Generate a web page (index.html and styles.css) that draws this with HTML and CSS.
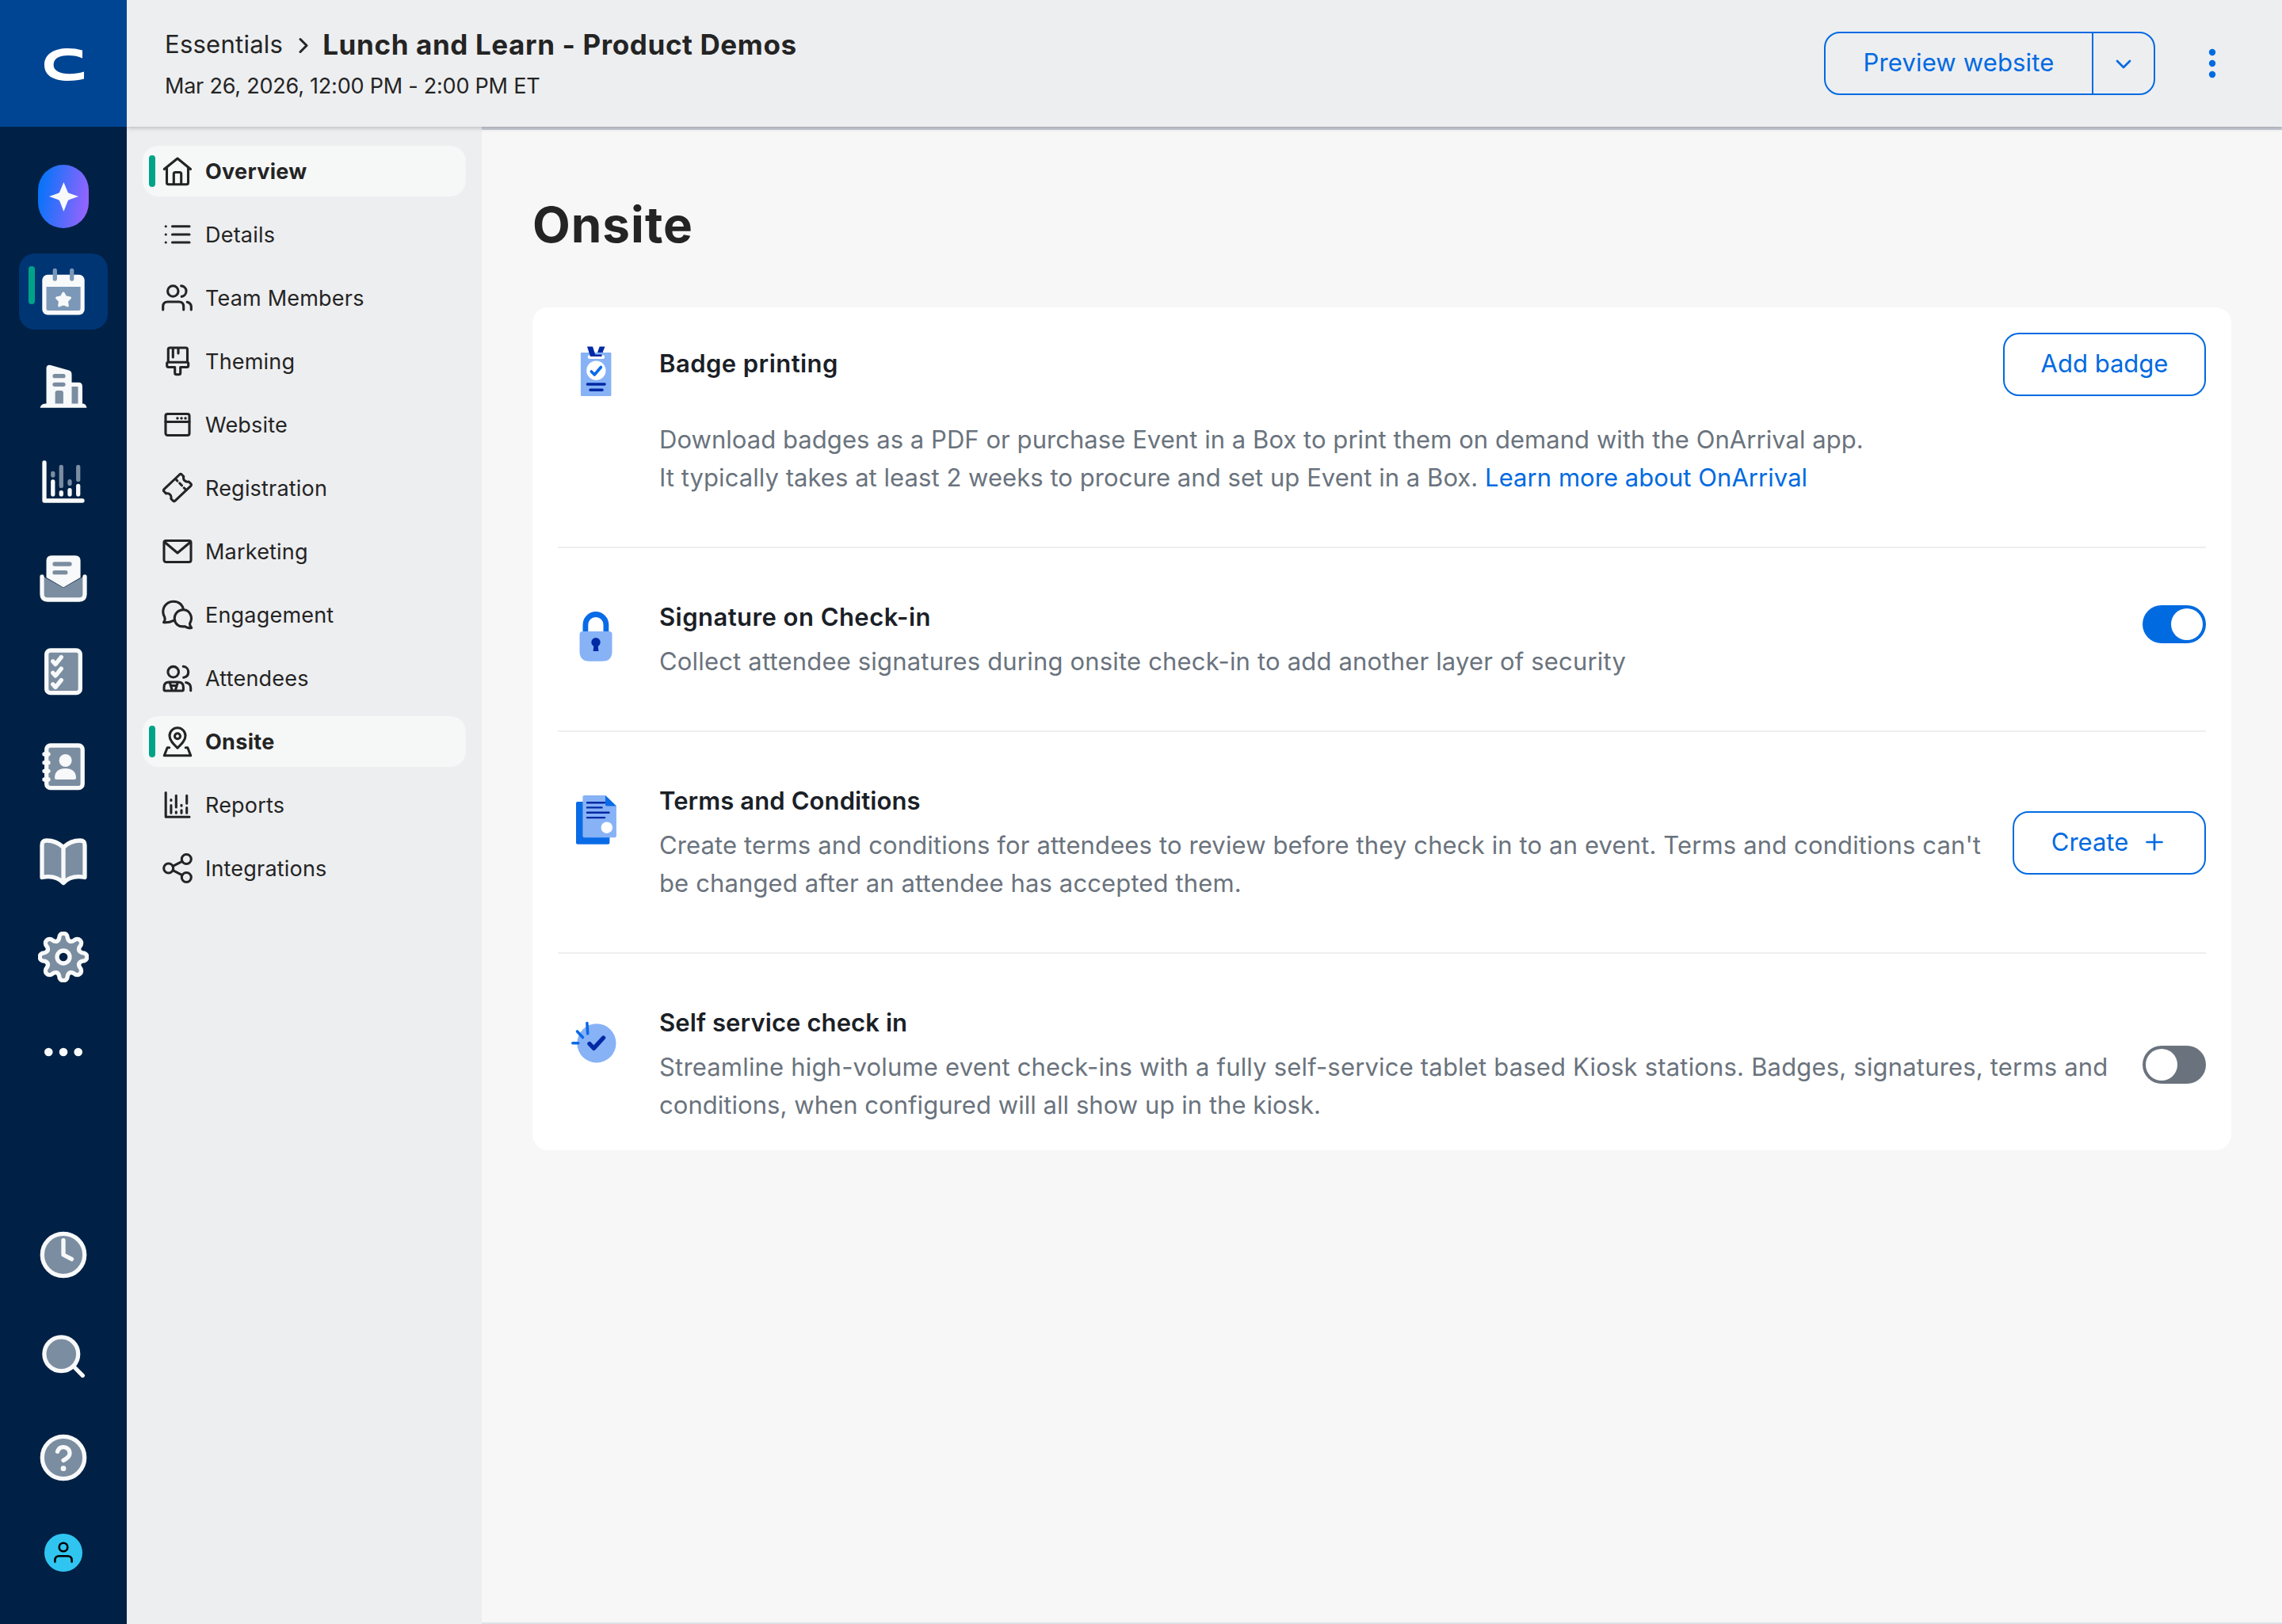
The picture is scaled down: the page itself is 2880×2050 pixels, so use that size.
FILE: index.html
```html
<!DOCTYPE html>
<html lang="en">

<head>
  <meta charset="UTF-8" />
  <meta name="viewport" content="width=device-width, initial-scale=1.0" />
  <title>Onsite</title>
  <link rel="stylesheet" href="styles.css">
</head>

<body>
  <div class="app">
    <aside class="rail">
      <a class="logo" href="#">
        <svg width="160" height="160" viewBox="0 0 160 160"><path fill="#fff" d="M104 63.6C98 61.8 92 61 86 61C67 61 56 69 56 82C56 95 67 102 86 102C94 102 101 101.200 106 99.600V90.500C100 92.500 94 93.200 88 93.200C75 93.200 67.600 89 67.600 82C67.600 74 74 70 86 70C93 70 99 71 104 73.500Z"/></svg>
      </a>
      <a class="ai" href="#">
        <svg width="64" height="80" viewBox="0 0 64 80"><path fill="#f7f8f9" d="M32.400 22L37.500 34.200Q38.200 35.600 39.600 36.100L51 40L39.600 43.900Q38.200 44.400 37.500 45.800L32.400 59L27.300 45.800Q26.600 44.400 25.200 43.900L14 40L25.200 36.100Q26.600 35.600 27.300 34.200Z"/></svg>
      </a>
      <nav class="rail-nav">
        <a class="tile active" href="#">
          <svg viewBox="0 0 64 64">
            <rect class="w" x="5.300" y="10.700" width="53.400" height="50.800" rx="7"/>
            <path class="g" d="M10.500 26H53.600V53.500a2.500 2.500 0 0 1-2.500 2.500H13a2.500 2.500 0 0 1-2.500-2.500Z"/>
            <path class="gs" d="M21.300 5.300V16M42.700 5.300V16"/>
            <path class="w ws3" d="M32 34L34.600 38.800L40.500 40L36.500 44.200L37.300 50L32 47.600L26.700 50L27.500 44.200L23.500 40L29.400 38.800Z"/>
          </svg>
        </a>
        <a class="tile" href="#">
          <svg viewBox="0 0 64 64">
            <path class="w" d="M10.500 8.500Q11 4 16 5L39 11.500Q42.500 12.700 42.500 16.500V26.700H51Q56 26.700 56 32V53.500Q60.500 53.500 61.500 58.700H2.600Q3.500 53.500 10.500 53.500Z"/>
            <rect class="g" x="18.400" y="16" width="16.200" height="5.300" rx="2.650"/>
            <rect class="g" x="18.400" y="26.700" width="16.200" height="5.300" rx="2.650"/>
            <path class="g" d="M21.600 53.500V39.500Q21.600 37 24 37H29.500Q31.900 37 31.900 39.500V53.500ZM42.500 32H50.500V53.500H42.500Z"/>
          </svg>
        </a>
        <a class="tile" href="#">
          <svg viewBox="0 0 64 64">
            <path class="ws" d="M8 8V56H56M18.800 32V48M29.300 45.700V48M40 42.700V48M50.700 37.400V48"/>
            <path class="gs" d="M18.800 21.400V24M29.300 13.400V37.400M40 31.700V34.600M50.700 13.400V29.400"/>
          </svg>
        </a>
        <a class="tile" href="#">
          <svg viewBox="0 0 64 64">
            <path class="g" d="M7 32L32 46L57 32V61H7Z"/>
            <path class="w" d="M10.500 12Q10.500 5.300 17 5.300H47Q53.600 5.300 53.600 12V33L32 45.500L10.500 33Z"/>
            <path class="ws" d="M5 32V54Q5 61 12 61H52Q59 61 59 54V32"/>
            <path class="gs" d="M21 16H40M21 26.700H34.800"/>
          </svg>
        </a>
        <a class="tile" href="#">
          <svg viewBox="0 0 64 64">
            <rect class="g ws" x="10.700" y="5" width="42.600" height="53.700" rx="5"/>
            <path class="ws" d="M18.700 18.700L22 22.600L29.300 13.500M18.700 33.200L22 37.100L29.300 28M18.700 47.700L22 51.600L29.300 42.500"/>
          </svg>
        </a>
        <a class="tile" href="#">
          <svg viewBox="0 0 64 64">
            <rect class="g ws" x="10.700" y="5" width="45.500" height="53.700" rx="5"/>
            <path class="ws" d="M8 16H13M8 26.700H13M8 37.300H13M8 48H13"/>
            <circle class="w" cx="34.600" cy="24" r="8"/>
            <path class="w" d="M21 46C21 38 26 34 34.500 34S48 38 48 46Q48 48 46 48H23Q21 48 21 46Z"/>
          </svg>
        </a>
        <a class="tile" href="#">
          <svg viewBox="0 0 64 64">
            <path class="g ws" d="M32 13.500C26 8 19 5 11 5Q5 5 5 11V51.500C15 49.500 25 51 32 58.500C39 51 49 49.500 59 51.500V11Q59 5 53 5C45 5 38 8 32 13.500Z"/>
            <path class="ws" d="M32 13.500V58"/>
          </svg>
        </a>
        <a class="tile" href="#">
          <svg viewBox="-32 -32 64 64">
            <defs>
              <path id="tooth" d="M-8.200-19.900C-5.900-20.900-5.500-22.300-5.200-24.600A5.200 5.200 0 0 1 5.200-24.600C5.500-22.300 5.900-20.900 8.200-19.900"/>
            </defs>
            <circle class="g" r="21"/>
            <g class="g ws">
              <use href="#tooth"/>
              <use href="#tooth" transform="rotate(45)"/>
              <use href="#tooth" transform="rotate(90)"/>
              <use href="#tooth" transform="rotate(135)"/>
              <use href="#tooth" transform="rotate(180)"/>
              <use href="#tooth" transform="rotate(225)"/>
              <use href="#tooth" transform="rotate(270)"/>
              <use href="#tooth" transform="rotate(315)"/>
            </g>
            <circle class="ws hole" r="8"/>
          </svg>
        </a>
        <a class="tile" href="#">
          <svg viewBox="0 0 64 64">
            <circle class="w" cx="13.300" cy="32" r="5.300"/>
            <circle class="w" cx="32" cy="32" r="5.300"/>
            <circle class="w" cx="50.700" cy="32" r="5.300"/>
          </svg>
        </a>
      </nav>
      <div class="rail-tools">
        <svg viewBox="0 0 64 64">
          <circle class="g ws" cx="32" cy="32" r="26.700"/>
          <path class="ws" d="M32 13.700V32L42.500 37.400"/>
        </svg>
        <svg viewBox="0 0 64 64">
          <circle class="g ws" cx="29.300" cy="29.300" r="21.400"/>
          <path class="ws" d="M45 45L56.300 56.300"/>
        </svg>
        <svg viewBox="0 0 64 64">
          <circle class="g ws" cx="32" cy="32" r="26.700"/>
          <path class="ws" d="M24.500 24.300C25.800 20.500 28.500 18.600 32 18.600C36.500 18.600 40 22 40 26.500C40 31.500 35.500 33.300 32 35.400"/>
          <circle class="w" cx="32" cy="45.700" r="3.400"/>
        </svg>
        <svg class="avatar" viewBox="0 0 48 48">
          <circle cx="24" cy="24" r="24" fill="#30c5f0"/>
          <g fill="none" stroke="#000" stroke-width="2.600" stroke-linecap="round">
            <circle cx="24" cy="17" r="5.300"/>
            <path d="M13.400 35.500V33.500Q13.400 28.300 18.600 28.300H29.400Q34.600 28.300 34.600 33.500V35.500"/>
          </g>
        </svg>
      </div>
    </aside>

    <header class="header">
      <div class="heading">
        <div class="crumbs">
          <a class="crumb" href="#">Essentials</a>
          <svg class="crumb-arrow" width="12" height="20" viewBox="0 0 12 20"><path d="M2 2.500L10 10.500L2 18.500"/></svg>
          <strong class="event-name">Lunch and Learn - Product Demos</strong>
        </div>
        <div class="event-date">Mar 26, 2026, 12:00 PM - 2:00 PM ET</div>
      </div>
      <div class="split-btn">
        <a class="split-main" href="#">Preview website</a>
        <a class="split-toggle" href="#">
          <svg width="20" height="12" viewBox="0 0 20 12"><path d="M2 2L10 10L18 2"/></svg>
        </a>
      </div>
      <svg class="more" width="48" height="48" viewBox="0 0 48 48">
        <circle cx="24" cy="10" r="4.200"/><circle cx="24" cy="24" r="4.200"/><circle cx="24" cy="38" r="4.200"/>
      </svg>
    </header>

    <nav class="side">
      <a class="side-item active" href="#">
        <svg viewBox="0 0 40 40"><path d="M3.300 17.500L20 4L36.500 17.500M6.500 15.500V34.500Q6.500 36.800 8.800 36.800H31.200Q33.500 36.800 33.500 34.500V15.500M15.300 36.500V23.500Q15.300 21.500 17.300 21.500H22.700Q24.700 21.500 24.700 23.500V36.500"/></svg>
        <span>Overview</span>
      </a>
      <a class="side-item" href="#">
        <svg viewBox="0 0 40 40"><path d="M13.500 9.700H35M13.500 20H35M13.500 30H35M5.200 9.700h.1M5.200 20h.1M5.200 30h.1"/></svg>
        <span>Details</span>
      </a>
      <a class="side-item" href="#">
        <svg viewBox="0 0 40 40"><circle cx="14.300" cy="11.500" r="6.700"/><path d="M24.700 4.900C28.500 5.200 31 8 31 11.500S28.500 18 25.200 18.400M1.700 35V31Q1.700 25 7.700 25H21.700Q27.700 25 27.700 31V35M32.200 25.300Q37.300 26.500 37.300 31.500V35"/></svg>
        <span>Team Members</span>
      </a>
      <a class="side-item" href="#">
        <svg viewBox="0 0 40 40"><path d="M8.300 21.300V5Q8.300 3 10.300 3H30.500Q32.500 3 32.500 5V21.300M8 21.300H32Q33.700 21.300 33.700 23V25.500Q33.700 27.500 31.700 27.500H23.700V34.700Q23.700 36.700 21.700 36.700H18.700Q16.700 36.700 16.700 34.700V27.500H8.700Q6.700 27.500 6.700 25.500V23Q6.700 21.300 8 21.300ZM14.300 3.500V15M21 3.500V10"/></svg>
        <span>Theming</span>
      </a>
      <a class="side-item" href="#">
        <svg viewBox="0 0 40 40"><rect x="5" y="6.500" width="30" height="27" rx="2.500"/><path d="M5 16.500H35"/><path class="dot" d="M19.900 12h.1M25 12h.1M30 12h.1"/></svg>
        <span>Website</span>
      </a>
      <a class="side-item" href="#">
        <svg viewBox="0 0 40 40"><path d="M22.700 3Q24 1.800 25.300 3L27.800 5.500C26.500 9.500 30 13.200 34.200 12L36.800 14.600Q38 16 36.800 17.300L17 36.200Q15.700 37.400 14.400 36.200L11.800 33.500C13 29.500 9.500 25.800 5.500 27L3 24.300Q1.800 23 3 21.700ZM18.200 9.300L19.800 11M22.800 14L25.400 16.800M28.300 19.800L30 21.500"/></svg>
        <span>Registration</span>
      </a>
      <a class="side-item" href="#">
        <svg viewBox="0 0 40 40"><rect x="3" y="6.500" width="34" height="27" rx="2.500"/><path d="M4 8.500L20 22L36 8.500"/></svg>
        <span>Marketing</span>
      </a>
      <a class="side-item" href="#">
        <svg viewBox="0 0 40 40"><path d="M15 27.300C10.500 29.500 7 30.300 2.600 29.600C4.200 27.700 4.500 25.600 3.800 23.200C-1.500 14 4.500 3.500 14.500 3.200C21.500 3 26.500 7.500 27.700 13.500M35.600 31C40 24 36 14.300 28 13.800C20.500 13.400 16.200 19 16.200 24.800C16.600 31.500 21.500 35.800 29 34.700C32 36.500 35 37.300 37.700 36.600C36 34.700 35.300 33 35.600 31Z"/></svg>
        <span>Engagement</span>
      </a>
      <a class="side-item" href="#">
        <svg viewBox="0 0 40 40"><circle cx="14.700" cy="12.200" r="6.800"/><path d="M27.300 5.300C31 5.600 33.700 8.500 33.700 12.300S31.500 18.700 27.700 19.200M30.700 25.500Q36.700 26.500 36.700 32.500V35.800M3 34.500V31.500Q3 25 9.500 25H21Q27.400 25 27.400 31.500V34.500Q27.400 36 25.900 36H4.500Q3 36 3 34.500ZM10.300 25.500L13.300 35.500M20.300 25.500L17.300 35.500M11.500 29.500H19"/></svg>
        <span>Attendees</span>
      </a>
      <a class="side-item active" href="#">
        <svg viewBox="0 0 40 40"><path d="M20 28.200C14.500 22.800 10 18.500 10 12.800A10 10 0 0 1 30 12.800C30 18.500 25.500 22.800 20 28.200ZM9.700 27.700H7.200L3.300 37.700H36.700L32.800 27.700H30.300"/><circle cx="20" cy="13.200" r="3.500"/></svg>
        <span>Onsite</span>
      </a>
      <a class="side-item" href="#">
        <svg viewBox="0 0 40 40"><path d="M5.200 4.500V35.300H35"/><path d="M11.900 13.500V14.500M11.900 20.500V30.300M18.300 8.200V23M18.300 28.700V30.300M25 20.200V21.300M25 26.700V30.300M31.700 8.200V18.300M31.700 23.500V30.300"/></svg>
        <span>Reports</span>
      </a>
      <a class="side-item" href="#">
        <svg viewBox="0 0 40 40"><circle cx="8.700" cy="20" r="6"/><circle cx="31.300" cy="8.500" r="6"/><circle cx="31.300" cy="31.500" r="6"/><path d="M14.200 17.300L25.800 11.300M14.200 22.700L25.800 28.700"/></svg>
        <span>Integrations</span>
      </a>
    </nav>

    <main class="main">
      <h1>Onsite</h1>
      <div class="card">
        <section class="setting setting-badge">
          <svg class="setting-icon" viewBox="0 0 64 64">
            <rect fill="#87b2f6" x="12.900" y="9" width="38.500" height="55" rx="1.300"/>
            <rect fill="#fff" x="21.800" y="12.300" width="21.300" height="4.700" rx="2"/>
            <path fill="#0029a5" d="M21 1.500H28L31.200 11.500H39.500V14H25ZM36.700 1.500H43.500L40.500 9H34Z"/>
            <circle fill="#fff" cx="32.400" cy="31.700" r="12.200"/>
            <path class="st bright" d="M26.300 33L30.300 37L38.400 27.500"/>
            <path class="st dark" d="M21.500 49H43M25 56.200H40"/>
          </svg>
          <h2>Badge printing</h2>
          <a class="btn" href="#">Add badge</a>
          <p>Download badges as a PDF or purchase Event in a Box to print them on demand with the OnArrival app.<br>It typically takes at least 2 weeks to procure and set up Event in a Box. <a class="link" href="#">Learn more about OnArrival</a></p>
        </section>
        <section class="setting setting-signature">
          <svg class="setting-icon" viewBox="0 0 64 64">
            <path fill="none" stroke="#0a6be6" stroke-width="6.800" d="M18.900 27V16.500A13 13 0 0 1 44.900 16.500V27"/>
            <path fill="#87b2f6" d="M11.500 29Q11.500 25 15.500 25H48.500Q52.500 25 52.500 29V50Q52.500 62.700 40 62.700H24Q11.500 62.700 11.500 50Z"/>
            <circle fill="#0029a5" cx="32" cy="38.700" r="5.700"/>
            <path fill="#0029a5" d="M29.500 41H34.500L35.400 50H28.600Z"/>
          </svg>
          <h2>Signature on Check-in</h2>
          <span class="switch on"></span>
          <p>Collect attendee signatures during onsite check-in to add another layer of security</p>
        </section>
        <section class="setting setting-terms">
          <svg class="setting-icon" viewBox="0 0 64 64">
            <rect fill="#0a6be6" x="7" y="8" width="42.400" height="53.700" rx="2"/>
            <path fill="#87b2f6" d="M15.400 2Q15.400 0 17.400 0H44L57.900 13.500V51Q57.900 53.300 55.900 53.300H17.400Q15.400 53.300 15.400 51Z"/>
            <path fill="#0a6be6" d="M44 0L57.900 13.500H46Q44 13.500 44 11.500Z"/>
            <path class="st dark thin" d="M21 9.200H43M21 15.400H39.500M21 21.700H48.500M21 28.100H43"/>
            <circle fill="#fff" cx="45.800" cy="40.700" r="7.200"/>
          </svg>
          <h2>Terms and Conditions</h2>
          <a class="btn btn-create" href="#">Create <svg width="24" height="24" viewBox="0 0 24 24"><path d="M12 2.500V21.500M2.500 12H21.500"/></svg></a>
          <p>Create terms and conditions for attendees to review before they check in to an event. Terms and conditions can't<br>be changed after an attendee has accepted them.</p>
        </section>
        <section class="setting setting-kiosk">
          <svg class="setting-icon" viewBox="0 0 64 64">
            <circle fill="#87b2f6" cx="32.900" cy="32.800" r="24.600"/>
            <path class="st bright" d="M20.900 7.500L21.700 20.800M8.500 18L15.500 25.500M2.800 32.700H9.700"/>
            <path class="st dark thick" d="M24 33.500L29.300 39.300L41.500 26"/>
          </svg>
          <h2>Self service check in</h2>
          <span class="switch"></span>
          <p>Streamline high-volume event check-ins with a fully self-service tablet based Kiosk stations. Badges, signatures, terms and<br><span class="tight">conditions, when configured will all show up in the kiosk.</span></p>
        </section>
      </div>
    </main>
  </div>
</body>

</html>
```

FILE: styles.css
```css
* {
  margin: 0;
  padding: 0;
  box-sizing: border-box;
}

body {
  font-family: Inter, "Liberation Sans", sans-serif;
  font-size: 31px;
  line-height: 48px;
  color: #242424;
  background: #f7f7f7;
}

a {
  color: inherit;
  text-decoration: none;
}

svg {
  display: block;
  flex-shrink: 0;
}

.app {
  display: grid;
  grid-template-columns: 160px 448px 1fr;
  grid-template-rows: 160px 1fr;
  height: 2050px;
}

/* left rail */
.rail {
  grid-row: 1 / 3;
  position: relative;
  z-index: 2;
  display: flex;
  flex-direction: column;
  align-items: center;
  padding-bottom: 66px;
  background: #002145;
}

.logo {
  width: 160px;
  height: 160px;
  background: #004593;
}

.ai {
  width: 64px;
  height: 80px;
  margin: 48px 0 32px;
  border-radius: 32px;
  background: linear-gradient(100deg, #0074f8 5%, #9b63ff 95%);
}

.rail-nav {
  display: flex;
  flex-direction: column;
  gap: 24px;
}

.tile {
  position: relative;
  width: 112px;
  height: 96px;
  padding: 16px 24px;
  border-radius: 20px;
}

.tile svg {
  width: 64px;
  height: 64px;
}

.tile.active {
  background: #003574;
}

.tile.active::before {
  content: "";
  position: absolute;
  left: 12px;
  top: 16px;
  width: 8px;
  height: 48px;
  border-radius: 4px;
  background: #00a388;
}

.rail .w {
  fill: #f8f9fa;
}

.rail .g {
  fill: #7b8da0;
}

.rail .active .g {
  fill: #7c98b8;
}

.rail .ws,
.rail .gs {
  stroke: #f8f9fa;
  stroke-width: 5.3;
  stroke-linecap: round;
  stroke-linejoin: round;
}

.rail .ws:not(.g),
.rail .gs {
  fill: none;
}

.rail .gs {
  stroke: #7b8da0;
}

.rail .active .gs {
  stroke: #7c98b8;
}

.rail .ws3 {
  stroke: #f8f9fa;
  stroke-width: 3;
  stroke-linejoin: round;
}

.rail .ws.hole {
  fill: #002145;
}

.rail-tools {
  display: flex;
  flex-direction: column;
  align-items: center;
  gap: 64px;
  margin-top: auto;
}

.rail-tools svg {
  width: 64px;
  height: 64px;
}

.rail-tools .avatar {
  width: 48px;
  height: 48px;
}

/* header */
.header {
  grid-column: 2 / 4;
  position: relative;
  z-index: 1;
  display: flex;
  align-items: center;
  padding: 0 64px 0 48px;
  background: #edeef0;
  box-shadow: 0 1px 6px rgba(0, 0, 0, 0.26);
}

.heading {
  flex: 1;
}

.crumbs {
  display: flex;
  align-items: center;
  height: 40px;
}

.crumb {
  letter-spacing: 0.25px;
}

.crumb-arrow {
  margin: 2px 18px 0 20px;
  fill: none;
  stroke: #242424;
  stroke-width: 3;
  stroke-linecap: round;
  stroke-linejoin: round;
}

.event-name {
  font-size: 35px;
  font-weight: 700;
  letter-spacing: 0.62px;
}

.event-date {
  margin-top: 17px;
  font-size: 27px;
  line-height: 32px;
  letter-spacing: -0.22px;
}

.split-btn {
  display: flex;
  width: 418px;
  height: 80px;
  border: 2px solid #006ae1;
  border-radius: 20px;
  color: #006ae1;
}

.split-main {
  flex: 1;
  display: flex;
  align-items: center;
  justify-content: center;
  padding-bottom: 2px;
  letter-spacing: 0.15px;
}

.split-toggle {
  display: flex;
  align-items: center;
  justify-content: center;
  width: 78px;
  padding-top: 2px;
  border-left: 2px solid #006ae1;
}

.split-toggle path,
.btn path {
  fill: none;
  stroke: #006ae1;
  stroke-width: 2.7;
  stroke-linecap: round;
  stroke-linejoin: round;
}

.more {
  margin-left: 48px;
  fill: #006ae1;
}

/* event navigation */
.side {
  display: flex;
  flex-direction: column;
  gap: 16px;
  padding: 24px 20px;
  background: #edeef0;
}

.side-item {
  position: relative;
  display: flex;
  align-items: center;
  gap: 15px;
  height: 64px;
  padding-left: 24px;
  border-radius: 20px;
  font-size: 27px;
  letter-spacing: 0.2px;
}

.side-item span {
  padding-top: 1px;
}

.side-item svg {
  width: 40px;
  height: 40px;
  fill: none;
  stroke: #242424;
  stroke-width: 3.1;
  stroke-linecap: round;
  stroke-linejoin: round;
}

.side-item .dot {
  stroke-width: 3.4;
}

.side-item.active {
  background: #f6f8f8;
  font-weight: 700;
  letter-spacing: 0.3px;
}

.side-item.active::before {
  content: "";
  position: absolute;
  left: 8px;
  top: 12px;
  width: 8px;
  height: 40px;
  border-radius: 4px;
  background: #00a388;
}

/* content */
.main {
  padding: 76px 64px 0;
  border-top: 4px solid #c9ced9;
  border-bottom: 2px solid #dde1e8;
  background: #f7f7f7;
}

h1 {
  height: 88px;
  font-size: 62px;
  font-weight: 700;
  line-height: 88px;
  letter-spacing: 1px;
}

.card {
  margin-top: 60px;
  padding: 32px 32px 0;
  border-radius: 20px;
  background: #fff;
}

.setting {
  display: grid;
  grid-template-columns: 96px 1fr auto;
  grid-template-rows: 48px auto;
  column-gap: 32px;
  row-gap: 8px;
  padding: 63px 0;
  border-bottom: 2px solid #edeef0;
}

.setting-icon {
  grid-row: 1 / 3;
  width: 64px;
  height: 64px;
  margin: 17px 0 0 16px;
}

.setting h2 {
  grid-column: 2;
  font-size: 31px;
  font-weight: 600;
  letter-spacing: 0.45px;
  color: #1a2026;
}

.setting p {
  grid-column: 2;
  grid-row: 2;
  white-space: nowrap;
  letter-spacing: 0.18px;
  color: #6a737d;
}

.setting .tight {
  letter-spacing: 0.05px;
}

.setting > .btn,
.setting > .switch {
  grid-column: 3;
  grid-row: 1 / 3;
  align-self: start;
}

.link {
  color: #006ae1;
}

.setting-badge {
  grid-template-rows: 80px auto;
  row-gap: 31px;
  padding-top: 0;
}

.setting-badge .setting-icon {
  margin-top: 16px;
}

.setting-badge h2 {
  line-height: 78px;
}

.setting-badge p {
  letter-spacing: 0.05px;
}

.setting-terms h2,
.setting-kiosk h2 {
  letter-spacing: 0.1px;
}

.setting-terms p {
  letter-spacing: 0.13px;
}

.setting-kiosk {
  padding-bottom: 33px;
  border-bottom: 0;
}

.setting .btn {
  display: flex;
  align-items: center;
  justify-content: center;
  gap: 21px;
  width: 256px;
  height: 80px;
  padding-bottom: 2px;
  border: 2px solid #006ae1;
  border-radius: 20px;
  color: #006ae1;
}

.setting .btn-create {
  width: 244px;
  margin-top: 37px;
  padding-right: 4px;
}

.switch {
  width: 80px;
  height: 48px;
  padding: 4px;
  border-radius: 24px;
  background: #6a737d;
}

.switch::before {
  content: "";
  display: block;
  width: 40px;
  height: 40px;
  border-radius: 50%;
  background: #fff;
}

.switch.on {
  padding-left: 36px;
  background: #006ae1;
}

.setting-signature .switch {
  margin-top: 9px;
}

.setting-kiosk .switch {
  margin-top: 53px;
}

/* strokes of the setting icons */
.st {
  fill: none;
  stroke-width: 3.6;
  stroke-linecap: round;
  stroke-linejoin: round;
}

.st.bright {
  stroke: #0a6be6;
}

.st.dark {
  stroke: #0029a5;
}

.st.thin {
  stroke-width: 2.4;
}

.st.thick {
  stroke-width: 5.4;
}
```
